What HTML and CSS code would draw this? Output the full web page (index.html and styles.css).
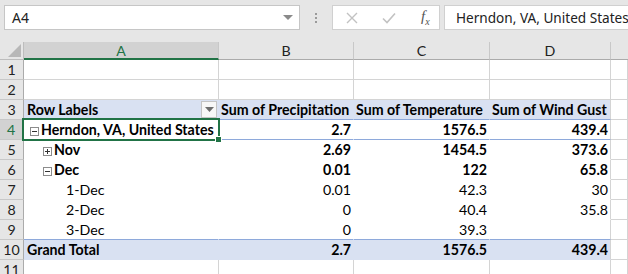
FILE: index.html
```html
<!DOCTYPE html>
<html lang="en">
<head>
  <meta charset="UTF-8" />
  <title>Pivot Table</title>
  <link rel="stylesheet" href="styles.css">
</head>
<body>
  <div class="toolbar">
    <div class="namebox">
      <span>A4</span>
      <svg width="10" height="6" viewBox="0 0 10 6"><path d="M0 0 L10 0 L5 5 Z" fill="#8a8a8a"/></svg>
    </div>
    <div class="grip"><i></i><i></i><i></i></div>
    <div class="fxbox">
      <svg width="14" height="14" viewBox="0 0 14 14"><path d="M2 2 L12 12 M12 2 L2 12" stroke="#c2c2c2" stroke-width="1.4"/></svg>
      <svg width="16" height="14" viewBox="0 0 16 14"><path d="M2 7.5 L6 11.5 L14 2.5" stroke="#c2c2c2" stroke-width="1.6" fill="none"/></svg>
      <span class="fx">f<sub>x</sub></span>
    </div>
    <div class="formula">Herndon, VA, United States</div>
  </div>

  <div class="sheet">
    <div class="corner"><svg width="13" height="13" viewBox="0 0 13 13"><path d="M13 0 L13 13 L0 13 Z" fill="#b8b8b8"/></svg></div>
    <div class="ch sel">A</div>
    <div class="ch">B</div>
    <div class="ch">C</div>
    <div class="ch">D</div>
    <div class="ch last"></div>

    <div class="rh">1</div>
    <div class="c"></div><div class="c"></div><div class="c"></div><div class="c"></div><div class="c"></div>

    <div class="rh">2</div>
    <div class="c"></div><div class="c"></div><div class="c"></div><div class="c"></div><div class="c"></div>

    <div class="rh">3</div>
    <div class="c band line labels"><span>Row Labels</span><span class="filter"><svg width="9" height="5" viewBox="0 0 9 5"><path d="M0 0 L9 0 L4.5 5 Z" fill="#6e6e6e"/></svg></span></div>
    <div class="c band line hd">Sum of Precipitation</div>
    <div class="c band line hd">Sum of Temperature</div>
    <div class="c band line hd edge">Sum of Wind Gust</div>
    <div class="c"></div>

    <div class="rh rsel">4</div>
    <div class="c pv line b active lv0"><span class="tog minus"></span>Herndon, VA, United States<span class="selbox"><i></i></span></div>
    <div class="c pv line b num">2.7</div>
    <div class="c pv line b num">1576.5</div>
    <div class="c pv line b num edge">439.4</div>
    <div class="c"></div>

    <div class="rh">5</div>
    <div class="c pv b lv1"><span class="tog plus"></span>Nov</div>
    <div class="c pv b num">2.69</div>
    <div class="c pv b num">1454.5</div>
    <div class="c pv b num edge">373.6</div>
    <div class="c"></div>

    <div class="rh">6</div>
    <div class="c pv b lv1"><span class="tog minus"></span>Dec</div>
    <div class="c pv b num">0.01</div>
    <div class="c pv b num">122</div>
    <div class="c pv b num edge">65.8</div>
    <div class="c"></div>

    <div class="rh">7</div>
    <div class="c pv lv2">1-Dec</div>
    <div class="c pv num">0.01</div>
    <div class="c pv num">42.3</div>
    <div class="c pv num edge">30</div>
    <div class="c"></div>

    <div class="rh">8</div>
    <div class="c pv lv2">2-Dec</div>
    <div class="c pv num">0</div>
    <div class="c pv num">40.4</div>
    <div class="c pv num edge">35.8</div>
    <div class="c"></div>

    <div class="rh">9</div>
    <div class="c pv line lv2">3-Dec</div>
    <div class="c pv line num">0</div>
    <div class="c pv line num">39.3</div>
    <div class="c pv line edge"></div>
    <div class="c"></div>

    <div class="rh">10</div>
    <div class="c band total b">Grand Total</div>
    <div class="c band total b num">2.7</div>
    <div class="c band total b num">1576.5</div>
    <div class="c band total b num edge">439.4</div>
    <div class="c"></div>

    <div class="rh">11</div>
    <div class="c"></div><div class="c"></div><div class="c"></div><div class="c"></div><div class="c"></div>
  </div>
</body>
</html>
```

FILE: styles.css
```css
body {
  margin: 0;
  background: #e6e6e6;
  font-family: Lato, "Liberation Sans", sans-serif;
  font-size: 14.2px;
  color: #000;
  overflow: hidden;
}
.toolbar {
  display: flex;
  align-items: flex-start;
  height: 42px;
  padding-top: 5px;
  box-sizing: border-box;
}
.namebox {
  margin-left: 4px;
  width: 296px;
  flex: none;
  height: 25px;
  box-sizing: border-box;
  background: #fff;
  border: 1px solid #c6c6c6;
  display: flex;
  align-items: center;
  justify-content: space-between;
  padding: 0 6px 0 7px;
  font-family: "Noto Sans", sans-serif;
  font-size: 14px;
  color: #222;
}
.grip {
  width: 32px;
  flex: none;
  display: flex;
  flex-direction: column;
  align-items: center;
  gap: 2px;
  padding-top: 8px;
}
.grip i {
  width: 2px;
  height: 2px;
  background: #9a9a9a;
}
.fxbox {
  width: 108px;
  flex: none;
  height: 25px;
  box-sizing: border-box;
  background: #fff;
  border: 1px solid #d0d0d0;
  display: flex;
  align-items: center;
  padding-left: 12px;
  gap: 22px;
}
.fx {
  font-family: "Liberation Serif", serif;
  font-style: italic;
  font-size: 15px;
  color: #555;
  margin-left: 2px;
}
.fx sub {
  font-size: 10px;
}
.formula {
  margin-left: 4px;
  flex: 1;
  min-width: 0;
  height: 25px;
  box-sizing: border-box;
  background: #fff;
  border: 1px solid #d0d0d0;
  border-right: none;
  padding-left: 11px;
  font-family: "Noto Sans", sans-serif;
  font-size: 13.6px;
  line-height: 23px;
  color: #222;
  white-space: nowrap;
}
.sheet {
  display: grid;
  grid-template-columns: 24px 195px 135px 136px 121px 1fr;
  grid-template-rows: 18px repeat(11, 20px);
  background: #fff;
}
.sheet > div {
  box-sizing: border-box;
  white-space: nowrap;
}
.corner {
  background: #e6e6e6;
  border-right: 1px solid #bdbdbd;
  border-bottom: 1px solid #bdbdbd;
  display: flex;
  align-items: flex-end;
  justify-content: flex-end;
  padding: 0 2px 2px 0;
}
.ch {
  background: #e6e6e6;
  border-right: 1px solid #c8c8c8;
  border-bottom: 1px solid #ababab;
  text-align: center;
  line-height: 17px;
  color: #222;
}
.ch.sel {
  background: #d2d2d2;
  border-bottom: 2px solid #217346;
  color: #217346;
}
.ch.last {
  border-right: none;
}
.rh {
  background: #e6e6e6;
  border-right: 1px solid #ababab;
  border-bottom: 1px solid #c8c8c8;
  text-align: center;
  line-height: 19px;
  color: #222;
}
.rh.rsel {
  background: #d2d2d2;
  color: #217346;
  border-right: 2px solid #217346;
}
.c {
  border-right: 1px solid #d4d4d4;
  border-bottom: 1px solid #d4d4d4;
  line-height: 20px;
  padding: 0 3px;
}
.band {
  background: #d9e1f2;
  border-right-color: #d9e1f2;
  border-bottom-color: #d9e1f2;
  font-weight: bold;
}
.pv {
  border-right-color: #fff;
  border-bottom-color: #fff;
}
.line {
  border-bottom-color: #8ea9db;
}
.edge {
  border-right-color: #d4d4d4;
}
.b {
  font-weight: bold;
}
.num {
  text-align: right;
  padding-right: 2px;
}
.hd {
  padding-left: 2px;
}
.labels {
  display: flex;
  justify-content: space-between;
  align-items: center;
  padding-right: 1px;
}
.filter {
  width: 16px;
  height: 17px;
  box-sizing: border-box;
  background: #f7f7f7;
  border: 1px solid #c4c4c4;
  display: flex;
  align-items: center;
  justify-content: center;
}
.lv0 {
  padding-left: 6px;
}
.lv1 {
  padding-left: 19px;
}
.lv2 {
  padding-left: 42px;
}
.tog {
  display: inline-block;
  position: relative;
  width: 9px;
  height: 9px;
  box-sizing: border-box;
  border: 1px solid #8c8c8c;
  background: #fff;
  margin-right: 2px;
  vertical-align: -1px;
}
.tog::before {
  content: "";
  position: absolute;
  left: 1px;
  top: 3px;
  width: 5px;
  height: 1px;
  background: #333;
}
.tog.plus::after {
  content: "";
  position: absolute;
  left: 3px;
  top: 1px;
  width: 1px;
  height: 5px;
  background: #333;
}
.active {
  position: relative;
}
.selbox {
  position: absolute;
  left: -2px;
  top: -2px;
  right: -2px;
  bottom: -2px;
  border: 2px solid #217346;
}
.selbox i {
  position: absolute;
  right: -4px;
  bottom: -4px;
  width: 5px;
  height: 5px;
  background: #217346;
  border: 1px solid #fff;
}
```
